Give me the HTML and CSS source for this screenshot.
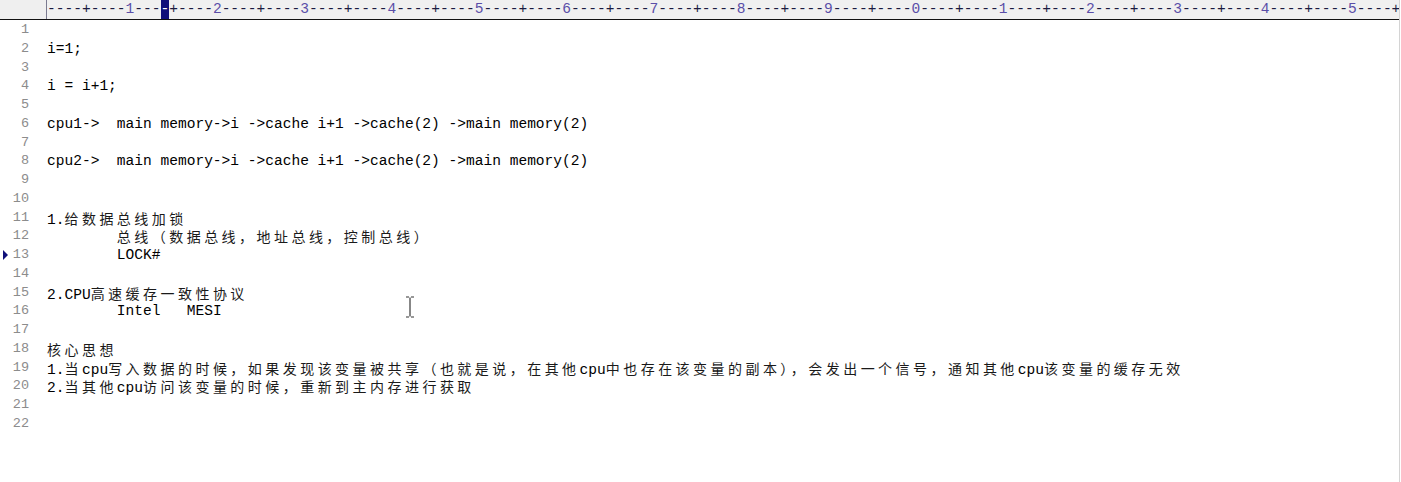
FILE: index.html
```html
<!DOCTYPE html>
<html>
<head>
<meta charset="utf-8">
<link rel="stylesheet" href="styles.css">
</head>
<body>
<div class="editor">
  <div class="ruler">
    <div class="ruler-gutter"></div>
    <div class="ruler-text">----+----<span class="d">1</span>---<span class="caret">-</span>+----<span class="d">2</span>----+----<span class="d">3</span>----+----<span class="d">4</span>----+----<span class="d">5</span>----+----<span class="d">6</span>----+----<span class="d">7</span>----+----<span class="d">8</span>----+----<span class="d">9</span>----+----<span class="d">0</span>----+----<span class="d">1</span>----+----<span class="d">2</span>----+----<span class="d">3</span>----+----<span class="d">4</span>----+----<span class="d">5</span>----+</div>
  </div>
  <div class="lines">
    <div class="ln"><span class="no">1</span><span class="tx"></span></div>
    <div class="ln"><span class="no">2</span><span class="tx">i=1;</span></div>
    <div class="ln"><span class="no">3</span><span class="tx"></span></div>
    <div class="ln"><span class="no">4</span><span class="tx">i = i+1;</span></div>
    <div class="ln"><span class="no">5</span><span class="tx"></span></div>
    <div class="ln"><span class="no">6</span><span class="tx">cpu1->  main memory->i ->cache i+1 ->cache(2) ->main memory(2)</span></div>
    <div class="ln"><span class="no">7</span><span class="tx"></span></div>
    <div class="ln"><span class="no">8</span><span class="tx">cpu2->  main memory->i ->cache i+1 ->cache(2) ->main memory(2)</span></div>
    <div class="ln"><span class="no">9</span><span class="tx"></span></div>
    <div class="ln"><span class="no">10</span><span class="tx"></span></div>
    <div class="ln"><span class="no">11</span><span class="tx">1.<span class="w">给数据总线加锁</span></span></div>
    <div class="ln"><span class="no">12</span><span class="tx">	<span class="w">总线（数据总线，地址总线，控制总线）</span></span></div>
    <div class="ln"><span class="no"><span class="mark"></span>13</span><span class="tx">	LOCK#</span></div>
    <div class="ln"><span class="no">14</span><span class="tx"></span></div>
    <div class="ln"><span class="no">15</span><span class="tx">2.CPU<span class="w">高速缓存一致性协议</span></span></div>
    <div class="ln"><span class="no">16</span><span class="tx">	Intel	MESI</span></div>
    <div class="ln"><span class="no">17</span><span class="tx"></span></div>
    <div class="ln"><span class="no">18</span><span class="tx"><span class="w">核心思想</span></span></div>
    <div class="ln"><span class="no">19</span><span class="tx">1.<span class="w">当</span>cpu<span class="w">写入数据的时候，如果发现该变量被共享（也就是说，在其他</span>cpu<span class="w">中也存在该变量的副本），会发出一个信号，通知其他</span>cpu<span class="w">该变量的缓存无效</span></span></div>
    <div class="ln"><span class="no">20</span><span class="tx">2.<span class="w">当其他</span>cpu<span class="w">访问该变量的时候，重新到主内存进行获取</span></span></div>
    <div class="ln"><span class="no">21</span><span class="tx"></span></div>
    <div class="ln"><span class="no">22</span><span class="tx"></span></div>
  </div>
  <svg class="ibeam" width="10" height="22" viewBox="0 0 10 22">
    <path d="M1 1h3M6 1h3M1 21h3M6 21h3" stroke="#333" stroke-width="1.2" fill="none"/>
    <rect x="4.3" y="1.5" width="1.4" height="19" fill="#555"/>
  </svg>
</div>
</body>
</html>
```
FILE: styles.css
```css
html, body {
  margin: 0;
  padding: 0;
  background: #ffffff;
}

.editor {
  position: relative;
  width: 1400px;
  height: 482px;
  border-right: 1px solid #d4d4d4;
  box-sizing: border-box;
  background: #ffffff;
  font-family: "Liberation Mono", "Noto Sans CJK SC", monospace;
  font-size: 14.55px;
  color: #111111;
  overflow: hidden;
}

.ruler {
  display: flex;
  height: 19px;
  border-bottom: 1px solid #111111;
  background: #f0f0f0;
}

.ruler-gutter {
  width: 46px;
  flex: none;
  border-right: 1px solid #7a7a90;
  background: #efefef;
}

.ruler-text {
  white-space: pre;
  line-height: 19px;
  color: #1a1a40;
}

.d {
  color: #5a4ea8;
}

.caret {
  display: inline-block;
  background: #10107a;
  color: #ffffff;
  height: 19px;
  vertical-align: top;
}

.lines {
  display: flex;
  flex-direction: column;
  padding-top: 1px;
}

.ln {
  display: flex;
  height: 18.76px;
  line-height: 18.76px;
  white-space: pre;
}

.no {
  display: flex;
  justify-content: flex-end;
  align-items: center;
  width: 29px;
  margin-right: 18px;
  flex: none;
  color: #8c8c8c;
  font-size: 13.5px;
}

.mark {
  margin-right: auto;
  margin-left: 3px;
  width: 0;
  height: 0;
  border-top: 5px solid transparent;
  border-bottom: 5px solid transparent;
  border-left: 5px solid #10107a;
}

.tx {
  display: block;
  tab-size: 8;
  -moz-tab-size: 8;
  white-space: pre;
  color: #000000;
}

.w {
  font-family: "Noto Sans CJK SC", sans-serif;
  font-size: 14px;
  letter-spacing: 3.46px;
  line-height: 18px;
  color: #1a1a1a;
}

.ibeam {
  position: absolute;
  left: 405px;
  top: 296px;
}
```
